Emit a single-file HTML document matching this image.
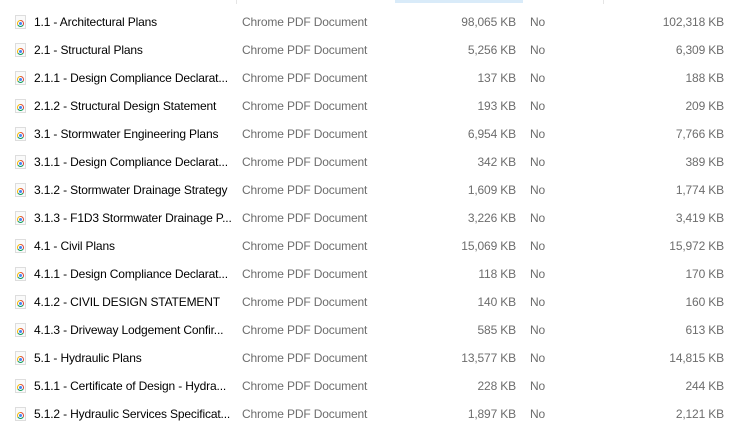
<!DOCTYPE html><html><head><style>
body{margin:0;width:731px;height:427px;background:#fff;font-family:"Liberation Sans",sans-serif;font-size:12px;letter-spacing:-0.15px;overflow:hidden;position:relative}
.r{position:absolute;left:0;width:731px;height:28px;line-height:28px}
.r span{position:absolute;white-space:nowrap}
.n{left:34px;color:#000}
.t{left:242px;color:#6d6d6d}
.s{right:215px;color:#6d6d6d}
.o{left:530px;color:#6d6d6d}
.c{right:7px;color:#6d6d6d}
.i{position:absolute;left:15px;top:7px;width:11px;height:14px;background:#fafafa;border:1px solid #ddd;box-sizing:border-box}
.i:after{content:"";position:absolute;left:1px;top:4px;width:7px;height:7px;border-radius:50%;background:conic-gradient(#db4437 0 120deg,#0f9d58 120deg 240deg,#f4b400 240deg);}
.i:before{content:"";position:absolute;left:3px;top:6px;width:3px;height:3px;border-radius:50%;background:#4285f4;z-index:1;box-shadow:0 0 0 1px #fff}
</style></head><body>
<div style="position:absolute;left:395px;top:0;width:128px;height:3px;background:#d9ebf9"></div>
<div style="position:absolute;left:236px;top:0;width:1px;height:4px;background:#e5e5e5"></div>
<div style="position:absolute;left:603px;top:0;width:1px;height:4px;background:#e5e5e5"></div>
<div id="list"></div>
<script>
var d=[["1.1 - Architectural Plans","98,065","102,318"],["2.1 - Structural Plans","5,256","6,309"],["2.1.1 - Design Compliance Declarat...","137","188"],["2.1.2 - Structural Design Statement","193","209"],["3.1 - Stormwater Engineering Plans","6,954","7,766"],["3.1.1 - Design Compliance Declarat...","342","389"],["3.1.2 - Stormwater Drainage Strategy","1,609","1,774"],["3.1.3 - F1D3 Stormwater Drainage P...","3,226","3,419"],["4.1 - Civil Plans","15,069","15,972"],["4.1.1 - Design Compliance Declarat...","118","170"],["4.1.2 - CIVIL DESIGN STATEMENT","140","160"],["4.1.3 - Driveway Lodgement Confir...","585","613"],["5.1 - Hydraulic Plans","13,577","14,815"],["5.1.1 - Certificate of Design - Hydra...","228","244"],["5.1.2 - Hydraulic Services Specificat...","1,897","2,121"]];
var h="";d.forEach(function(x,i){h+='<div class="r" style="top:'+(8+28*i)+'px"><div class="i"></div><span class="n">'+x[0]+'</span><span class="t">Chrome PDF Document</span><span class="s">'+x[1]+' KB</span><span class="o">No</span><span class="c">'+x[2]+' KB</span></div>'});
document.getElementById("list").innerHTML=h;
</script>
</body></html>
